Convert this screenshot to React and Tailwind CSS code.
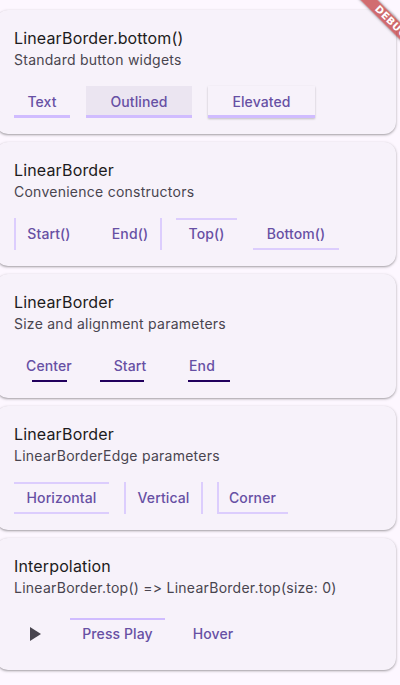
import React from "react";

const F = { fontFamily: "Inter, 'Noto Sans', sans-serif" };

function Card({ title, subtitle, children, rowClass = "mt-4 h-8" }) {
  return (
    <div className="-ml-1 w-[400px] rounded-xl bg-[#f7f2fa] shadow-[0_1px_2px_rgba(0,0,0,0.28),0_1px_3px_1px_rgba(0,0,0,0.08)] pl-[18px] pt-4 pb-4">
      <div className="text-[16px] leading-6 font-normal text-[#1d1b20] tracking-[0.15px]">{title}</div>
      <div className="text-[14px] leading-5 text-[#49454f] tracking-[0.25px]">{subtitle}</div>
      <div className={"flex items-center " + rowClass}>{children}</div>
    </div>
  );
}

function Btn({ className = "", children, under }) {
  return (
    <div className={"relative h-8 flex items-center justify-center shrink-0 pb-px text-[14px] font-medium text-[#6750a4] tracking-[0.1px] " + className}>
      {children}
      {under}
    </div>
  );
}

export default function App() {
  return (
    <div style={F} className="relative w-[400px] h-[685px] overflow-hidden bg-[#fdf7ff]">
      <div className="flex flex-col gap-2 pt-[10px]">
        <Card title="LinearBorder.bottom()" subtitle="Standard button widgets">
          <Btn className="w-[56px] shadow-[inset_0_-3px_0_#d0bcff]">Text</Btn>
          <Btn className="ml-4 w-[106px] bg-[#ebe5f1] shadow-[inset_0_-3px_0_#d0bcff]">Outlined</Btn>
          <Btn className="ml-4 w-[107px] bg-[#f7f2fa] shadow-[inset_0_-3px_0_#d0bcff,0_1px_2px_rgba(0,0,0,0.22)]">Elevated</Btn>
        </Card>

        <Card title="LinearBorder" subtitle="Convenience constructors">
          <Btn className="w-[70px] shadow-[inset_2px_0_0_#dccdfd]">Start()</Btn>
          <Btn className="ml-[14px] w-[64px] shadow-[inset_-2px_0_0_#dccdfd]">End()</Btn>
          <Btn className="ml-[14px] w-[61px] shadow-[inset_0_2px_0_#dccdfd]">Top()</Btn>
          <Btn className="ml-4 w-[86px] shadow-[inset_0_-2px_0_#dccdfd]">Bottom()</Btn>
        </Card>

        <Card title="LinearBorder" subtitle="Size and alignment parameters">
          <Btn
            className="w-[70px]"
            under={<span className="absolute bottom-0 left-[18px] w-[35px] h-[2px] bg-[#21005d]" />}
          >
            Center
          </Btn>
          <Btn
            className="ml-[14px] w-[64px]"
            under={<span className="absolute bottom-0 left-[2px] w-[44px] h-[2px] bg-[#21005d]" />}
          >
            Start
          </Btn>
          <Btn
            className="ml-2 w-[64px]"
            under={<span className="absolute bottom-0 left-[18px] w-[42px] h-[2px] bg-[#21005d]" />}
          >
            End
          </Btn>
        </Card>

        <Card title="LinearBorder" subtitle="LinearBorderEdge parameters">
          <Btn className="w-[95px] shadow-[inset_0_2px_0_#dccdfd,inset_0_-2px_0_#dccdfd]">Horizontal</Btn>
          <Btn className="ml-[15px] w-[79px] shadow-[inset_2px_0_0_#dccdfd,inset_-2px_0_0_#dccdfd]">Vertical</Btn>
          <Btn className="ml-[14px] w-[71px] shadow-[inset_2px_0_0_#dccdfd,inset_0_-2px_0_#dccdfd]">Corner</Btn>
        </Card>

        <Card
          title="Interpolation"
          subtitle="LinearBorder.top() => LinearBorder.top(size: 0)"
          rowClass="mt-4 h-10"
        >
          <div className="w-10 h-10 flex items-center justify-center shrink-0">
            <svg width="24" height="24" viewBox="0 0 24 24">
              <path d="M8 5v14l11-7z" fill="#49454f" />
            </svg>
          </div>
          <Btn className="ml-4 w-[95px] shadow-[inset_0_2px_0_#d0bcff]">Press Play</Btn>
          <Btn className="ml-4 w-[64px]">Hover</Btn>
        </Card>
      </div>

      <div className="absolute left-[351px] top-[16px] w-[80px] h-[12px] rotate-45 bg-[rgba(183,28,28,0.63)] shadow-[0_0_3px_rgba(0,0,0,0.5)] flex items-center justify-center">
        <span className="text-[10px] leading-none font-black text-white tracking-[0.5px]" style={{ fontFamily: "'DejaVu Sans', sans-serif" }}>
          DEBUG
        </span>
      </div>
    </div>
  );
}
